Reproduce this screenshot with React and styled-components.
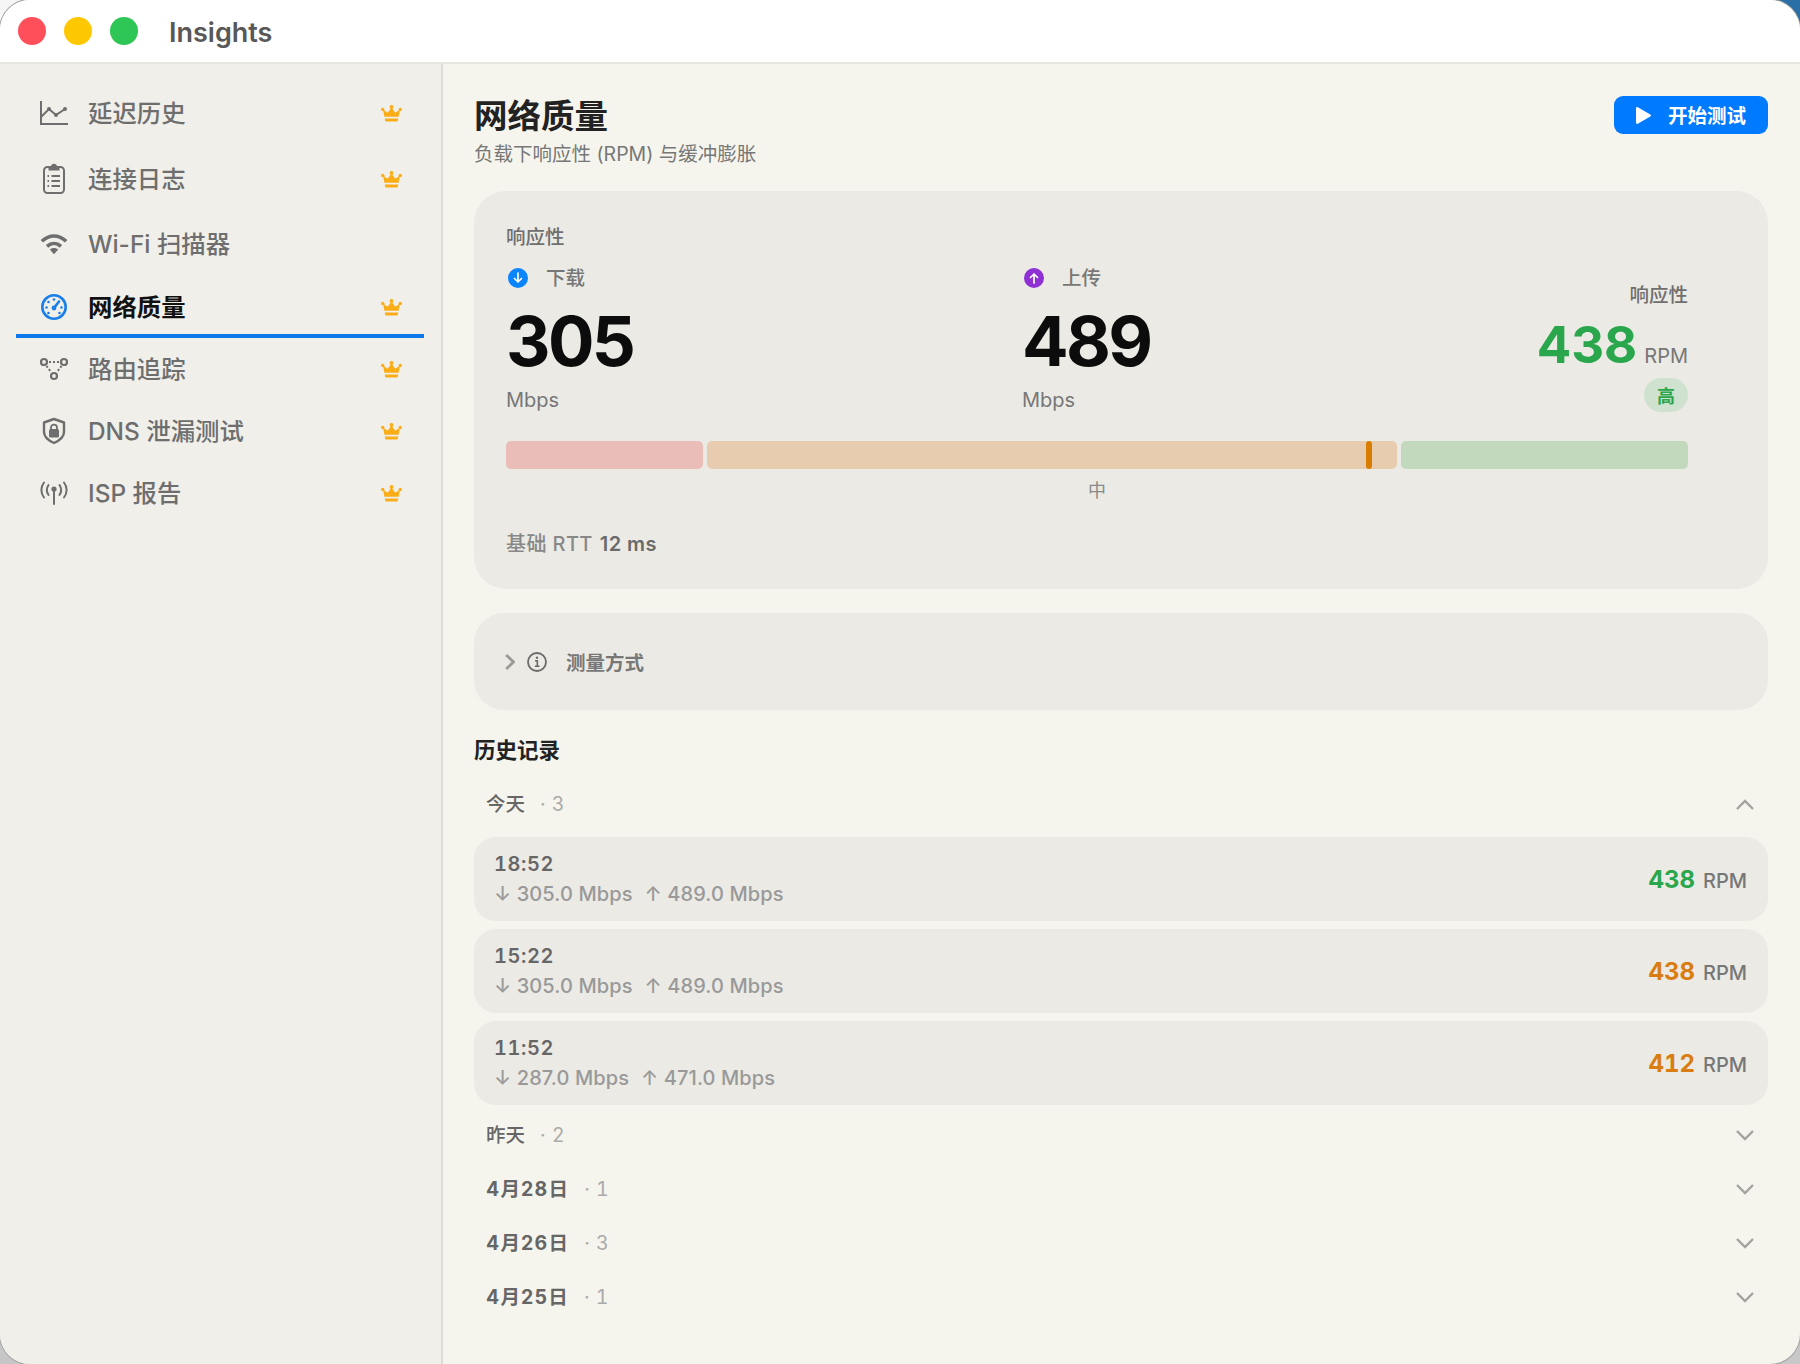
import React from "react";
import styled, { createGlobalStyle } from "styled-components";

const GlobalStyle = createGlobalStyle`
  html, body, #root {
    margin: 0;
    height: 100%;
  }
  body {
    font-family: Inter, "Noto Sans CJK SC", sans-serif;
    overflow: hidden;
  }
  * {
    box-sizing: border-box;
  }
`;

const Desktop = styled.div`
  height: 100%;
  background:
    linear-gradient(#f6f6f6, #f6f6f6) top left / 40px 40px no-repeat,
    linear-gradient(#2a6fa6, #2a6fa6) top right / 40px 40px no-repeat,
    linear-gradient(#c6c6c6, #c6c6c6) bottom left / 40px 40px no-repeat,
    linear-gradient(#c8c8c8, #c8c8c8) bottom right / 40px 40px no-repeat;
`;

const Window = styled.div`
  height: 100%;
  display: flex;
  flex-direction: column;
  border-radius: 30px;
  overflow: hidden;
  background: #f5f5ee;
  box-shadow: 0 0 0 1px #a0a0a0;
`;

const TitleBar = styled.header`
  height: 64px;
  flex: none;
  display: flex;
  align-items: center;
  gap: 18px;
  padding-left: 18px;
  background: #fff;
  border-bottom: 2px solid #e6e5e0;
`;

const Light = styled.span`
  width: 28px;
  height: 28px;
  border-radius: 50%;
  background: ${(p) => p.$color};
`;

const AppTitle = styled.h1`
  margin: 2px 0 0 13px;
  font-size: 27px;
  font-weight: 600;
  color: #585858;
`;

const Body = styled.div`
  flex: 1;
  display: flex;
  min-height: 0;
`;

const Sidebar = styled.nav`
  width: 443px;
  flex: none;
  padding: 16px 17px 0 16px;
  background: #f0efea;
  border-right: 2px solid #dddcd6;
`;

const NavItem = styled.div`
  height: ${(p) => p.$h}px;
  display: flex;
  align-items: center;
  padding: 0 22px 0 24px;
  font-size: 24.4px;
  font-weight: ${(p) => (p.$active ? 700 : 500)};
  color: ${(p) => (p.$active ? "#111" : "#6e6e6e")};
  box-shadow: ${(p) => (p.$active ? "inset 0 -4px 0 #0a7aed" : "none")};
`;

const NavIcon = styled.span`
  width: 28px;
  display: flex;
  justify-content: center;
  margin-right: 20px;
  color: #6e6e6e;
`;

const NavLabel = styled.span`
  flex: 1;
  padding-bottom: 4px;
`;

const CrownWrap = styled.span`
  display: flex;
  margin-top: 1px;
`;

const Main = styled.main`
  flex: 1;
  min-width: 0;
  padding: 32px 32px 0 31px;
`;

const PageHead = styled.div`
  display: flex;
  justify-content: space-between;
  align-items: flex-start;
`;

const PageTitle = styled.h2`
  margin: 0 0 5px;
  font-size: 33.5px;
  line-height: 40px;
  font-weight: 700;
  color: #222;
`;

const PageSub = styled.p`
  margin: 0;
  font-size: 19.5px;
  line-height: 26px;
  color: #777;
`;

const StartButton = styled.button`
  height: 38px;
  display: flex;
  align-items: center;
  gap: 17px;
  padding: 0 22px;
  border: 0;
  border-radius: 9px;
  background: #007aff;
  color: #fff;
  font: 700 19.5px Inter, "Noto Sans CJK SC", sans-serif;
`;

const ButtonLabel = styled.span`
  padding-bottom: 2px;
`;

const Panel = styled.section`
  background: #ebeae5;
  border-radius: 32px;
`;

const ResponseCard = styled(Panel)`
  margin-top: 24px;
  padding: 33px 80px 32px 32px;
`;

const CardLabel = styled.div`
  font-size: 19.5px;
  line-height: 26px;
  font-weight: 500;
  color: #6f6f6f;
`;

const Stats = styled.div`
  display: grid;
  grid-template-columns: 516px 516px minmax(0, 1fr);
  margin-top: 15px;
  height: 148px;
`;

const StatHead = styled.div`
  display: flex;
  align-items: center;
  gap: 18px;
  padding-left: 2px;
  font-size: 19.5px;
  line-height: 26px;
  font-weight: 500;
  color: #777;
`;

const StatValue = styled.div`
  margin-top: 12px;
  font-size: 69px;
  line-height: 76px;
  font-weight: 700;
  letter-spacing: -2.6px;
  color: #0c0c0c;
`;

const StatUnit = styled.div`
  margin-top: 8px;
  font-size: 20px;
  line-height: 26px;
  color: #777;
`;

const Score = styled.div`
  display: flex;
  flex-direction: column;
  align-items: flex-end;
  padding-top: 17px;
`;

const ScoreLine = styled.div`
  display: flex;
  align-items: baseline;
  gap: 7px;
  margin-top: 11px;
  height: 52px;
  line-height: 52px;
  white-space: nowrap;
`;

const ScoreValue = styled.span`
  font-size: 51px;
  font-weight: 700;
  color: #2aa64c;
`;

const ScoreUnit = styled.span`
  font-size: 20px;
  color: #777;
`;

const Badge = styled.span`
  width: 44px;
  height: 34px;
  margin-top: 7px;
  display: flex;
  align-items: center;
  justify-content: center;
  border-radius: 17px;
  background: #cfe2cf;
  color: #2aa64c;
  font-size: 18px;
  font-weight: 700;
`;

const Bar = styled.div`
  display: flex;
  gap: 4px;
  height: 28px;
  margin-top: 28px;
`;

const Segment = styled.div`
  position: relative;
  flex: ${(p) => p.$grow} 0 0;
  border-radius: 5px;
  background: ${(p) => p.$color};
`;

const Marker = styled.span`
  position: absolute;
  top: 0;
  bottom: 0;
  left: ${(p) => p.$left}px;
  width: 6px;
  border-radius: 3px;
  background: #d97d00;
`;

const BandLabel = styled.div`
  margin-top: 10px;
  text-align: center;
  font-size: 18px;
  line-height: 24px;
  color: #8a8a8a;
`;

const Rtt = styled.div`
  margin-top: 28px;
  display: flex;
  gap: 7px;
  font-size: 20px;
  line-height: 26px;
  font-weight: 500;
  letter-spacing: 0.4px;
  color: #888;
`;

const RttValue = styled.span`
  font-weight: 600;
  color: #6a6a6a;
`;

const MethodCard = styled(Panel)`
  margin-top: 24px;
  height: 97px;
  display: flex;
  align-items: center;
  padding-left: 31px;
  border-radius: 30px;
`;

const MethodInfo = styled.span`
  display: flex;
  margin: 0 19px 0 12px;
`;

const MethodLabel = styled.span`
  font-size: 19.5px;
  font-weight: 700;
  color: #777;
`;

const HistoryTitle = styled.h3`
  margin: 26px 0 13px;
  font-size: 21.5px;
  line-height: 28px;
  font-weight: 700;
  color: #222;
`;

const GroupHead = styled.div`
  height: 54px;
  display: flex;
  align-items: center;
  padding: 0 14px 0 12px;
  color: #666;
  font-size: 19.5px;
  font-weight: 500;
`;

const GroupLabel = styled.span`
  padding-bottom: 3px;
  font-weight: ${(p) => (p.$date ? 700 : 500)};
  letter-spacing: ${(p) => (p.$date ? "1.2px" : "0")};
`;

const GroupCount = styled.span`
  flex: 1;
  margin-left: 15px;
  padding-bottom: 1px;
  font-weight: 400;
  letter-spacing: 0.5px;
  font-variant-numeric: tabular-nums;
  color: #aaa;
`;

const Rows = styled.div`
  display: flex;
  flex-direction: column;
  gap: 8px;
  margin: 6px 0 3px;
`;

const Row = styled.div`
  height: 84px;
  display: flex;
  align-items: center;
  justify-content: space-between;
  padding: 0 21px 0 20px;
  border-radius: 22px;
  background: #ebeae5;
`;

const RowTime = styled.div`
  font-size: 20px;
  line-height: 30px;
  font-weight: 600;
  letter-spacing: 0.6px;
  font-variant-numeric: tabular-nums;
  color: #666;
`;

const RowSpeeds = styled.div`
  display: flex;
  gap: 12px;
  font-size: 20px;
  line-height: 30px;
  font-weight: 500;
  letter-spacing: 0.1px;
  color: #999;
`;

const RowScore = styled.div`
  display: flex;
  align-items: baseline;
  gap: 8px;
  font-size: 20px;
  font-weight: 500;
  color: #777;
`;

const RowValue = styled.span`
  font-size: 24px;
  font-weight: 700;
  font-variant-numeric: tabular-nums;
  color: ${(p) => p.$color};
`;

const ChartIcon = () => (
  <svg width="28" height="26" viewBox="0 0 28 26" fill="none" stroke="currentColor" strokeWidth="2">
    <path d="M1 1V24H28" />
    <path d="M1 17L9 9L16 15L25 9" />
    <circle cx="9" cy="9" r="2" fill="currentColor" stroke="none" />
    <circle cx="16" cy="15" r="2" fill="currentColor" stroke="none" />
    <circle cx="25" cy="9" r="2" fill="currentColor" stroke="none" />
  </svg>
);

const ClipboardIcon = () => (
  <svg width="24" height="32" viewBox="0 0 24 32" fill="none" stroke="currentColor" strokeWidth="2">
    <rect x="2" y="4" width="20" height="26" rx="3.5" />
    <path d="M7.5 6.5V4.5H9.5C10 2.5 11 1.8 12 1.8S14 2.5 14.5 4.5H16.5V6.5Z" fill="currentColor" />
    <path d="M9.5 13H18M9.5 18H18M9.5 23H18" strokeWidth="1.8" />
    <path d="M5.5 13H7M5.5 18H7M5.5 23H7" strokeWidth="1.8" />
  </svg>
);

const WifiIcon = () => (
  <svg width="30" height="22" viewBox="0 0 30 22" fill="none" stroke="currentColor" strokeWidth="3.8">
    <path d="M2 8C10 0.5 20 0.5 28 8" />
    <path d="M7.5 13.5C12 9.5 18 9.5 22.5 13.5" />
    <path d="M10.5 17C13 14.8 17 14.8 19.5 17L15 22Z" fill="currentColor" stroke="none" />
  </svg>
);

const GaugeIcon = () => (
  <svg width="28" height="28" viewBox="0 0 28 28" fill="none" stroke="#1a7fe8" strokeWidth="2.6">
    <circle cx="14" cy="14" r="11.7" />
    <path d="M14 15L19 8.5" strokeWidth="2.6" strokeLinecap="round" />
    <g fill="#1a7fe8" stroke="none">
      <circle cx="14" cy="6.5" r="1.3" />
      <circle cx="8.5" cy="9" r="1.3" />
      <circle cx="6.5" cy="14.5" r="1.3" />
      <circle cx="8.5" cy="20" r="1.3" />
      <circle cx="19.5" cy="20" r="1.3" />
      <circle cx="21.5" cy="14.5" r="1.3" />
      <circle cx="14" cy="15" r="2.4" />
    </g>
  </svg>
);

const RouteIcon = () => (
  <svg width="28" height="24" viewBox="0 0 28 24" fill="none" stroke="currentColor" strokeWidth="2.2">
    <circle cx="4" cy="5" r="3" />
    <circle cx="24" cy="5" r="3" />
    <circle cx="14" cy="19" r="3" />
    <path d="M9 5H19M6.5 9L11 15M21.5 9L17 15" strokeWidth="2" strokeDasharray="2 2" />
  </svg>
);

const ShieldIcon = () => (
  <svg width="24" height="28" viewBox="0 0 24 28" fill="none" stroke="currentColor" strokeWidth="2.4">
    <path d="M12 2L22 5.5V15C22 20 17.5 23.5 12 26C6.5 23.5 2 20 2 15V5.5Z" strokeLinejoin="round" />
    <rect x="7" y="12" width="10" height="8.5" rx="1.5" fill="currentColor" stroke="none" />
    <path d="M9 12.5V10.5C9 8.7 10.3 7.6 12 7.6S15 8.7 15 10.5V12.5" strokeWidth="1.8" />
  </svg>
);

const AntennaIcon = () => (
  <svg width="28" height="24" viewBox="0 0 28 24" fill="none" stroke="currentColor" strokeWidth="2" strokeLinecap="round">
    <circle cx="14" cy="8" r="2.6" fill="currentColor" stroke="none" />
    <path d="M14 9V23" />
    <path d="M8.5 4C6.5 7 6.5 11 8.5 14M19.5 4C21.5 7 21.5 11 19.5 14" />
    <path d="M4 1.5C0.5 6 0.5 12 4 16.5M24 1.5C27.5 6 27.5 12 24 16.5" />
  </svg>
);

const Crown = () => (
  <svg width="21" height="17" viewBox="0 0 21 17" fill="#fbad18">
    <circle cx="10.5" cy="2" r="1.9" />
    <circle cx="1.7" cy="4.5" r="1.7" />
    <circle cx="19.3" cy="4.5" r="1.7" />
    <path d="M10.5 2.5L14.3 7.7L19 4.6L17.6 11.8H3.4L2 4.6L6.7 7.7Z" />
    <path d="M3.7 13.4H17.3L16.8 15.6C16.7 16.3 16.2 16.6 15.6 16.6H5.4C4.8 16.6 4.3 16.3 4.2 15.6Z" />
  </svg>
);

const PlayIcon = () => (
  <svg width="15" height="17" viewBox="0 0 15 17" fill="#fff">
    <path d="M0 1.2C0 0.2 0.9 -0.3 1.8 0.2L14.3 7.4C15.2 7.9 15.2 9.1 14.3 9.6L1.8 16.8C0.9 17.3 0 16.8 0 15.8Z" />
  </svg>
);

const ArrowDot = ({ color, up }) => (
  <svg width="20" height="20" viewBox="0 0 20 20">
    <circle cx="10" cy="10" r="10" fill={color} />
    <path
      d={up ? "M10 15V6M6.5 9.5L10 6L13.5 9.5" : "M10 5V14M6.5 10.5L10 14L13.5 10.5"}
      fill="none"
      stroke="#fff"
      strokeWidth="1.7"
      strokeLinecap="round"
      strokeLinejoin="round"
    />
  </svg>
);

const InfoIcon = () => (
  <svg width="20" height="20" viewBox="0 0 20 20" fill="none" stroke="#6a6a6a" strokeWidth="1.8">
    <circle cx="10" cy="10" r="9" />
    <path d="M8 8.7H10.3V14.2M7.8 14.3H12.5" strokeWidth="1.6" />
    <circle cx="10" cy="5.8" r="1.2" fill="#6a6a6a" stroke="none" />
  </svg>
);

const ChevronRight = () => (
  <svg width="10" height="16" viewBox="0 0 10 16" fill="none" stroke="#9a9a96" strokeWidth="2.8">
    <path d="M1.2 1L8.5 8L1.2 15" />
  </svg>
);

const Chevron = ({ up }) => (
  <svg width="18" height="11" viewBox="0 0 18 11" fill="none" stroke="#a3a39f" strokeWidth="2.4">
    <path d={up ? "M1 10L9 2L17 10" : "M1 1L9 9L17 1"} />
  </svg>
);

const navItems = [
  { label: "延迟历史", icon: <ChartIcon />, h: 66, crown: true },
  { label: "连接日志", icon: <ClipboardIcon />, h: 66, crown: true },
  { label: "Wi-Fi 扫描器", icon: <WifiIcon />, h: 64 },
  { label: "网络质量", icon: <GaugeIcon />, h: 62, crown: true, active: true },
  { label: "路由追踪", icon: <RouteIcon />, h: 62, crown: true },
  { label: "DNS 泄漏测试", icon: <ShieldIcon />, h: 62, crown: true },
  { label: "ISP 报告", icon: <AntennaIcon />, h: 62, crown: true },
];

const todayRows = [
  { time: "18:52", down: "305.0", up: "489.0", rpm: 438, color: "#2aa64c" },
  { time: "15:22", down: "305.0", up: "489.0", rpm: 438, color: "#d97d12" },
  { time: "11:52", down: "287.0", up: "471.0", rpm: 412, color: "#d97d12" },
];

const olderGroups = [
  { label: "昨天", count: 2 },
  { label: "4月28日", count: 1, date: true },
  { label: "4月26日", count: 3, date: true },
  { label: "4月25日", count: 1, date: true },
];

export default function App() {
  return (
    <Desktop>
      <GlobalStyle />
      <Window>
        <TitleBar>
          <Light $color="#ff4f5a" />
          <Light $color="#fec800" />
          <Light $color="#2ec654" />
          <AppTitle>Insights</AppTitle>
        </TitleBar>
        <Body>
          <Sidebar>
            {navItems.map((item) => (
              <NavItem key={item.label} $h={item.h} $active={item.active}>
                <NavIcon>{item.icon}</NavIcon>
                <NavLabel>{item.label}</NavLabel>
                {item.crown && (
                  <CrownWrap>
                    <Crown />
                  </CrownWrap>
                )}
              </NavItem>
            ))}
          </Sidebar>
          <Main>
            <PageHead>
              <div>
                <PageTitle>网络质量</PageTitle>
                <PageSub>负载下响应性 (RPM) 与缓冲膨胀</PageSub>
              </div>
              <StartButton>
                <PlayIcon />
                <ButtonLabel>开始测试</ButtonLabel>
              </StartButton>
            </PageHead>

            <ResponseCard>
              <CardLabel>响应性</CardLabel>
              <Stats>
                <div>
                  <StatHead>
                    <ArrowDot color="#0a84ff" />
                    下载
                  </StatHead>
                  <StatValue>305</StatValue>
                  <StatUnit>Mbps</StatUnit>
                </div>
                <div>
                  <StatHead>
                    <ArrowDot color="#8e30d4" up />
                    上传
                  </StatHead>
                  <StatValue>489</StatValue>
                  <StatUnit>Mbps</StatUnit>
                </div>
                <Score>
                  <CardLabel>响应性</CardLabel>
                  <ScoreLine>
                    <ScoreValue>438</ScoreValue>
                    <ScoreUnit>RPM</ScoreUnit>
                  </ScoreLine>
                  <Badge>高</Badge>
                </Score>
              </Stats>
              <Bar>
                <Segment $grow={197} $color="#ebbdb8" />
                <Segment $grow={690} $color="#e8ccb0">
                  <Marker $left={659} />
                </Segment>
                <Segment $grow={287} $color="#c2d9bd" />
              </Bar>
              <BandLabel>中</BandLabel>
              <Rtt>
                基础 RTT
                <RttValue>12 ms</RttValue>
              </Rtt>
            </ResponseCard>

            <MethodCard>
              <ChevronRight />
              <MethodInfo>
                <InfoIcon />
              </MethodInfo>
              <MethodLabel>测量方式</MethodLabel>
            </MethodCard>

            <HistoryTitle>历史记录</HistoryTitle>
            <GroupHead>
              <GroupLabel>今天</GroupLabel>
              <GroupCount>· 3</GroupCount>
              <Chevron up />
            </GroupHead>
            <Rows>
              {todayRows.map((row) => (
                <Row key={row.time}>
                  <div>
                    <RowTime>{row.time}</RowTime>
                    <RowSpeeds>
                      <span>↓ {row.down} Mbps</span>
                      <span>↑ {row.up} Mbps</span>
                    </RowSpeeds>
                  </div>
                  <RowScore>
                    <RowValue $color={row.color}>{row.rpm}</RowValue>
                    RPM
                  </RowScore>
                </Row>
              ))}
            </Rows>
            {olderGroups.map((group) => (
              <GroupHead key={group.label}>
                <GroupLabel $date={group.date}>{group.label}</GroupLabel>
                <GroupCount>· {group.count}</GroupCount>
                <Chevron />
              </GroupHead>
            ))}
          </Main>
        </Body>
      </Window>
    </Desktop>
  );
}
